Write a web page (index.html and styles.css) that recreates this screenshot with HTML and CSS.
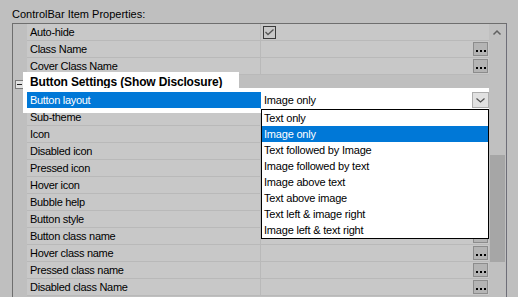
FILE: index.html
```html
<!DOCTYPE html>
<html lang="en">
<head>
  <meta charset="UTF-8" />
  <title>ControlBar Item Properties</title>
  <link rel="stylesheet" href="styles.css">
</head>
<body>
  <div class="panel">
    <div class="caption">ControlBar Item Properties:</div>

    <div class="grid">
      <div class="rows">
        <div class="row">
          <div class="gutter"></div>
          <div class="cells">
            <div class="name">Auto-hide</div>
            <div class="value">
              <span class="check">
                <svg width="11" height="11" viewBox="0 0 11 11"><polyline points="1.5,5 4,7.5 9.5,2.5" fill="none" stroke="#555" stroke-width="1.3"/></svg>
              </span>
            </div>
          </div>
        </div>
        <div class="row">
          <div class="gutter"></div>
          <div class="cells">
            <div class="name">Class Name</div>
            <div class="value"><span class="dots"><i></i><i></i><i></i></span></div>
          </div>
        </div>
        <div class="row">
          <div class="gutter"></div>
          <div class="cells">
            <div class="name">Cover Class Name</div>
            <div class="value"><span class="dots"><i></i><i></i><i></i></span></div>
          </div>
        </div>

        <!-- category -->
        <div class="row category">
          <div class="gutter"><span class="toggle"></span></div>
          <div class="cat-label">Button Settings (Show Disclosure)</div>
        </div>

        <div class="row">
          <div class="gutter"></div>
          <div class="cells selected">
            <div class="name">Button layout</div>
            <div class="value combo">
              Image only
              <span class="drop-btn">
                <svg width="15" height="14" viewBox="0 0 15 14"><polyline points="3.5,5.5 7.5,9 11.5,5.5" fill="none" stroke="#505050" stroke-width="1.2"/></svg>
              </span>
              <ul class="list">
                <li>Text only</li>
                <li class="active">Image only</li>
                <li>Text followed by Image</li>
                <li>Image followed by text</li>
                <li>Image above text</li>
                <li>Text above image</li>
                <li>Text left &amp; image right</li>
                <li>Image left &amp; text right</li>
              </ul>
            </div>
          </div>
        </div>
        <div class="row">
          <div class="gutter"></div>
          <div class="cells"><div class="name">Sub-theme</div><div class="value"></div></div>
        </div>
        <div class="row">
          <div class="gutter"></div>
          <div class="cells"><div class="name">Icon</div><div class="value"><span class="dots"><i></i><i></i><i></i></span></div></div>
        </div>
        <div class="row">
          <div class="gutter"></div>
          <div class="cells"><div class="name">Disabled icon</div><div class="value"><span class="dots"><i></i><i></i><i></i></span></div></div>
        </div>
        <div class="row">
          <div class="gutter"></div>
          <div class="cells"><div class="name">Pressed icon</div><div class="value"><span class="dots"><i></i><i></i><i></i></span></div></div>
        </div>
        <div class="row">
          <div class="gutter"></div>
          <div class="cells"><div class="name">Hover icon</div><div class="value"><span class="dots"><i></i><i></i><i></i></span></div></div>
        </div>
        <div class="row">
          <div class="gutter"></div>
          <div class="cells"><div class="name">Bubble help</div><div class="value"></div></div>
        </div>
        <div class="row">
          <div class="gutter"></div>
          <div class="cells"><div class="name">Button style</div><div class="value"></div></div>
        </div>
        <div class="row">
          <div class="gutter"></div>
          <div class="cells"><div class="name">Button class name</div><div class="value"><span class="dots"><i></i><i></i><i></i></span></div></div>
        </div>
        <div class="row">
          <div class="gutter"></div>
          <div class="cells"><div class="name">Hover class name</div><div class="value"><span class="dots"><i></i><i></i><i></i></span></div></div>
        </div>
        <div class="row">
          <div class="gutter"></div>
          <div class="cells"><div class="name">Pressed class name</div><div class="value"><span class="dots"><i></i><i></i><i></i></span></div></div>
        </div>
        <div class="row">
          <div class="gutter"></div>
          <div class="cells"><div class="name">Disabled class Name</div><div class="value"><span class="dots"><i></i><i></i><i></i></span></div></div>
        </div>
      </div>

      <!-- vertical scrollbar -->
      <div class="scrollbar">
        <div class="arrow">
          <svg width="17" height="17" viewBox="0 0 17 17"><polyline points="4.5,10.5 8,7 11.5,10.5" fill="none" stroke="#606060" stroke-width="1.5"/></svg>
        </div>
        <div class="thumb"></div>
      </div>
    </div>
  </div>
</body>
</html>
```

FILE: styles.css
```css
body {
  margin: 0;
  height: 297px;
  overflow: hidden;
  background: #bfbfbf;
  font-family: "Liberation Sans", Arial, sans-serif;
  font-size: 11px;
  color: #000;
}

.panel {
  padding: 8px 0 0 12px;
}

.caption {
  height: 13px;
  line-height: 13px;
  margin-bottom: 2px;
}

.grid {
  display: flex;
  width: 495px;
  height: 274px;
  box-sizing: border-box;
  border: 1px solid #6e6e6e;
  border-bottom: none;
  border-right-color: #6e6e78;
}

.rows {
  width: 476px;
  overflow: hidden;
}

.row {
  display: flex;
  height: 17px;
}

.gutter {
  width: 14px;
  flex: none;
  background: #bfbfbf;
}

.cells {
  display: flex;
}

.name,
.value {
  height: 17px;
  box-sizing: border-box;
  border-bottom: 1px solid #b9b9b9;
  background: #c8c8c8;
  line-height: 16px;
  white-space: nowrap;
}

.name {
  width: 234px;
  padding-left: 3px;
  border-right: 1px solid #b9b9b9;
  letter-spacing: -0.3px;
}

.value {
  width: 228px;
  display: flex;
  align-items: center;
  justify-content: flex-end;
  padding-right: 1px;
}

.check {
  margin-right: auto;
  margin-left: 2px;
  width: 13px;
  height: 13px;
  box-sizing: border-box;
  border: 1px solid #3a3a3a;
}

.check svg {
  display: block;
}

.dots {
  width: 15px;
  height: 14px;
  box-sizing: border-box;
  border: 1px solid #8c8c8c;
  background: #b4b4b4;
  display: flex;
  align-items: flex-end;
  justify-content: center;
  gap: 2px;
  padding-bottom: 3px;
}

.dots i {
  width: 2px;
  height: 2px;
  background: #000;
}

/* category header */
.category {
  background: #bfbfbf;
}

.category .gutter {
  padding: 5px 0 0 2px;
  box-sizing: border-box;
}

.toggle {
  display: block;
  width: 9px;
  height: 9px;
  box-sizing: border-box;
  border: 1px solid #7a7a7a;
  background: #e2e2e2;
  position: relative;
}

.toggle::after {
  content: "";
  position: absolute;
  left: 1px;
  top: 3px;
  width: 5px;
  height: 1px;
  background: #202020;
}

.cat-label {
  position: relative;
  z-index: 1;
  width: 216px;
  height: 20px;
  box-sizing: border-box;
  margin: -3px 0 0 -4px;
  padding: 2px 0 0 7px;
  background: #fff;
  font-size: 12px;
  font-weight: bold;
  line-height: 16px;
  letter-spacing: -0.15px;
  white-space: nowrap;
}

/* selected row with open combo */
.cells.selected {
  position: relative;
  z-index: 2;
  box-shadow: 0 0 0 4px #fff;
}

.selected .name {
  background: #0078d7;
  color: #fff;
  border-right-color: #0078d7;
  border-bottom-color: #fff;
}

.selected .value {
  background: #fff;
  border-bottom-color: #fff;
}

.combo {
  position: relative;
  justify-content: flex-start;
  padding: 0 0 1px 3px;
  letter-spacing: -0.2px;
}

.drop-btn {
  margin-left: auto;
  width: 17px;
  height: 16px;
  box-sizing: border-box;
  border: 1px solid #adadad;
  background: #e1e1e1;
}

.drop-btn svg {
  display: block;
}

.list {
  position: absolute;
  left: 0;
  top: 17px;
  width: 228px;
  box-sizing: border-box;
  margin: 0;
  padding: 0;
  list-style: none;
  border: 1px solid #000;
  background: #fff;
  color: #000;
}

.list li {
  height: 16px;
  line-height: 16px;
  padding-left: 2px;
}

.list li.active {
  background: #0078d7;
  color: #fff;
}

/* scrollbar */
.scrollbar {
  width: 17px;
  background: #c0c0c0;
}

.arrow svg {
  display: block;
}

.thumb {
  width: 15px;
  height: 107px;
  margin: 114px 0 0 1px;
  background: #a6a6a6;
}
```
